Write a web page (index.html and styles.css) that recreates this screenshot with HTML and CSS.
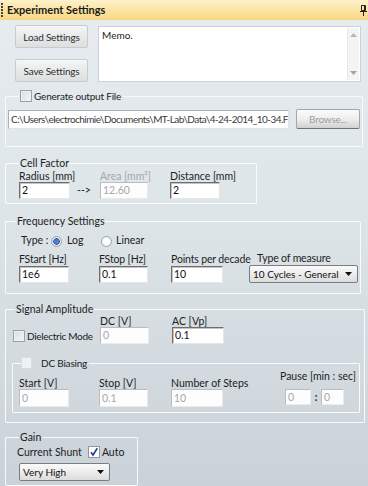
FILE: index.html
```html
<!DOCTYPE html>
<html>
<head>
<meta charset="utf-8">
<link rel="stylesheet" href="styles.css">
</head>
<body>
<div class="titlebar">
  <span class="grip"></span>
  <span class="title">Experiment Settings</span>
  <svg class="pin" width="7" height="11" viewBox="0 0 7 11"><path d="M1.5 0.5h4v5h-4z" fill="none" stroke="#222"/><path d="M0 6.5h7M3.5 6.5v4.5M4.5 1v4" stroke="#222"/></svg>
</div>

<div class="top-row">
  <div class="btn-col">
    <div class="btn">Load Settings</div>
    <div class="btn">Save Settings</div>
  </div>
  <div class="memo">
    <div class="memo-text">Memo.</div>
    <div class="vscroll">
      <svg width="7" height="4" viewBox="0 0 7 4"><path d="M0 4L3.5 0L7 4z" fill="#b4b8bb"/></svg>
      <svg width="7" height="4" viewBox="0 0 7 4"><path d="M0 0L3.5 4L7 0z" fill="#9ea3a6"/></svg>
    </div>
  </div>
</div>

<section class="group g-output">
  <div class="ghead h14"><i class="ln l"></i><span class="legend lg-check"><span class="chk"></span><span>Generate output File</span></span><i class="ln r"></i></div>
  <div class="gbody">
    <div class="path-row">
      <div class="tb path">C:\Users\electrochimie\Documents\MT-Lab\Data\4-24-2014_10-34.F</div>
      <div class="btn browse">Browse...</div>
    </div>
  </div>
</section>

<section class="group g-cell">
  <div class="ghead"><i class="ln l"></i><span class="legend">Cell Factor</span><i class="ln r"></i></div>
  <div class="gbody">
    <div class="row">
      <div class="field w51"><span class="lbl">Radius [mm]</span><div class="tb">2</div></div>
      <span class="arrow">--&gt;</span>
      <div class="field w48 dis"><span class="lbl">Area [mm²]</span><div class="tb">12.60</div></div>
      <div class="field w50 gap22"><span class="lbl">Distance [mm]</span><div class="tb">2</div></div>
    </div>
  </div>
</section>

<section class="group g-freq">
  <div class="ghead"><i class="ln l"></i><span class="legend">Frequency Settings</span><i class="ln r"></i></div>
  <div class="gbody">
    <div class="type-row">
      <span class="type-lbl">Type :</span>
      <span class="radio on"></span><span class="radio-lbl log">Log</span>
      <span class="radio off"></span><span class="radio-lbl">Linear</span>
    </div>
    <div class="row freq-row">
      <div class="field w50"><span class="lbl">FStart [Hz]</span><div class="tb">1e6</div></div>
      <div class="field w49 gap30"><span class="lbl">FStop [Hz]</span><div class="tb">0.1</div></div>
      <div class="field w52 gap24"><span class="lbl">Points per decade</span><div class="tb">10</div></div>
      <div class="field w109 gap26"><span class="lbl lbl-measure">Type of measure</span><div class="combo"><span>10 Cycles - General</span><svg width="7" height="4" viewBox="0 0 7 4"><path d="M0 0h7L3.5 4z" fill="#111"/></svg></div></div>
    </div>
  </div>
</section>

<section class="group g-signal">
  <div class="ghead"><i class="ln l"></i><span class="legend">Signal Amplitude</span><i class="ln r"></i></div>
  <div class="gbody">
    <div class="row">
      <div class="dielectric"><span class="chk"></span><span>Dielectric Mode</span></div>
      <div class="field w49 dis"><span class="lbl dark">DC [V]</span><div class="tb">0</div></div>
      <div class="field w52 gap24"><span class="lbl">AC [Vp]</span><div class="tb">0.1</div></div>
    </div>
    <section class="group g-bias">
      <div class="ghead h14"><i class="ln l"></i><span class="legend lg-check bias"><span class="chk light"></span><span>DC Biasing</span></span><i class="ln r"></i></div>
      <div class="gbody">
        <div class="row">
          <div class="field w50 dis"><span class="lbl dark">Start [V]</span><div class="tb">0</div></div>
          <div class="field w49 gap30 dis"><span class="lbl dark">Stop [V]</span><div class="tb">0.1</div></div>
          <div class="field w52 gap24 dis"><span class="lbl dark">Number of Steps</span><div class="tb">10</div></div>
          <div class="pause dis">
            <span class="lbl dark">Pause [min : sec]</span>
            <div class="pause-row"><div class="tb p1">0</div><span class="colon">:</span><div class="tb p2">0</div></div>
          </div>
        </div>
      </div>
    </section>
  </div>
</section>

<section class="group g-gain">
  <div class="ghead"><i class="ln l"></i><span class="legend">Gain</span><i class="ln r"></i></div>
  <div class="gbody">
    <div class="shunt-row">
      <span>Current Shunt</span>
      <span class="chk checked"><svg width="10" height="10" viewBox="0 0 10 10"><path d="M2 5.2L4 8L8.3 1.2" fill="none" stroke="#2b3d8f" stroke-width="1.6"/></svg></span>
      <span class="auto">Auto</span>
    </div>
    <div class="combo gain-combo"><span>Very High</span><svg width="7" height="4" viewBox="0 0 7 4"><path d="M0 0h7L3.5 4z" fill="#111"/></svg></div>
  </div>
</section>
</body>
</html>
```

FILE: styles.css
```css
* { box-sizing: border-box; }
html, body { margin: 0; padding: 0; }
body {
  width: 368px;
  height: 486px;
  overflow: hidden;
  font-family: Lato, "Liberation Sans", sans-serif;
  font-size: 10.5px;
  line-height: 12px;
  color: #1d1d1d;
  background: linear-gradient(#e6ecef 0%, #dfe6e9 40%, #cad2d9 100%);
}

/* title bar */
.titlebar {
  height: 20px;
  display: flex;
  align-items: center;
  background: linear-gradient(#fdf2cc, #fbe39e 55%, #f8d783);
}
.grip {
  width: 2px;
  height: 15px;
  margin-left: 1px;
  background: repeating-linear-gradient(#444 0 2px, transparent 2px 3px);
}
.title {
  margin-left: 4px;
  font-size: 11px;
  font-weight: bold;
  color: #1a1a1a;
}
.pin { margin-left: auto; margin-right: 1px; }

/* top row */
.top-row {
  display: flex;
  gap: 10px;
  padding: 5px 7px 0 15px;
}
.btn-col {
  display: flex;
  flex-direction: column;
  gap: 11px;
  width: 73px;
}
.btn {
  height: 23px;
  display: flex;
  align-items: center;
  justify-content: center;
  border: 1px solid #c7cbce;
  border-radius: 2px;
  background: linear-gradient(#f6f7f7, #e7e9ea 50%, #dcdfe0);
  color: #303030;
  font-size: 10px;
  letter-spacing: -0.2px;
}
.memo {
  flex: 1;
  height: 56px;
  margin-top: 1px;
  background: #fff;
  border: 1px solid #c9d2d8;
  display: flex;
}
.memo-text {
  flex: 1;
  padding: 2px 0 0 3px;
  font-size: 10px;
}
.vscroll {
  width: 12px;
  margin: 1px 1px 1px 0;
  background: #f3f4f5;
  border-left: 1px solid #e6e8ea;
  display: flex;
  flex-direction: column;
  justify-content: space-between;
  align-items: center;
  padding: 5px 0 5px;
}

/* group boxes: head row draws the top border around the caption */
.group { display: flex; flex-direction: column; }
.ghead {
  display: flex;
  height: 12px;
}
.ghead.h14 { height: 14px; }
.ln {
  align-self: flex-end;
  height: 50%;
  border-top: 1px solid #f8fafb;
}
.ln.l { border-left: 1px solid #f8fafb; border-top-left-radius: 2px; }
.ln.r { flex: 1; border-right: 1px solid #f8fafb; border-top-right-radius: 2px; }
.legend {
  padding: 0 1px;
  white-space: nowrap;
  line-height: 12px;
}
.lg-check {
  display: flex;
  align-items: center;
  gap: 2px;
  font-size: 10px;
  letter-spacing: -0.2px;
}
.gbody {
  border: 1px solid #f8fafb;
  border-top: 0;
  border-radius: 0 0 2px 2px;
}

.g-output { margin: 7px 5px 0 5px; }
.g-output .ln.l { width: 14px; }
.g-output .lg-check { padding: 0 2px 0 1px; }
.g-output > .gbody { padding: 6px 2px 17px 2px; }

.path-row {
  display: flex;
  align-items: center;
  gap: 7px;
}
.tb {
  height: 17px;
  background: #fff;
  border: 1px solid;
  border-color: #6e6e6e #e4e6e7 #e4e6e7 #6e6e6e;
  box-shadow: inset 1px 1px 0 #c4c4c4;
  padding-left: 2px;
  line-height: 15px;
  white-space: nowrap;
  overflow: hidden;
  color: #111;
}
.path {
  width: 282px;
  height: 19px;
  line-height: 17px;
  border-color: #a9b0b4 #e0e4e6 #e0e4e6 #a9b0b4;
  box-shadow: none;
  color: #3a3a3a;
  font-size: 10px;
  letter-spacing: -0.55px;
}
.browse {
  width: 64px;
  height: 20px;
  border: 1px solid #a2a6a8;
  border-bottom-color: #6f7375;
  border-radius: 2px;
  background: linear-gradient(#fbfbfb, #eeeeee 50%, #cfd1d2);
  color: #9c9c9c;
}

.row {
  display: flex;
  align-items: flex-end;
}
.field {
  display: flex;
  flex-direction: column;
}
.lbl { line-height: 12px; white-space: nowrap; }
.w48 { width: 48px; }
.w49 { width: 49px; }
.w50 { width: 50px; }
.w51 { width: 51px; }
.w52 { width: 52px; }
.w109 { width: 109px; }
.gap22 { margin-left: 22px; }
.gap24 { margin-left: 23px; }
.gap26 { margin-left: 26px; }
.gap30 { margin-left: 30px; }

.dis .lbl { color: #a3a7aa; }
.dis .lbl.dark { color: #1d1d1d; }
.dis .tb {
  border-color: #b9bdbf #e8eaeb #e8eaeb #b9bdbf;
  box-shadow: none;
  color: #a8a8a8;
  background: #fdfdfd;
}

/* cell factor */
.g-cell { margin: 10px 0 0 5px; width: 252px; }
.g-cell .ln.l { width: 14px; }
.g-cell > .gbody { padding: 1px 0 4px 13px; }
.arrow {
  width: 30px;
  padding-left: 7px;
  line-height: 15px;
  margin-bottom: 1px;
}

/* frequency */
.g-freq { margin: 11px 7px 0 5px; }
.g-freq .ln.l { width: 11px; }
.g-freq > .gbody { padding: 6px 0 10px 13px; }
.type-row {
  display: flex;
  align-items: center;
  height: 14px;
  padding-left: 2px;
}
.type-lbl { width: 30px; }
.radio {
  width: 11px;
  height: 11px;
  border-radius: 50%;
  border: 1px solid #9aa3a9;
  background: radial-gradient(circle, #fff 0 40%, #e2e6e9 100%);
  margin-top: 2px;
}
.radio.on {
  background: radial-gradient(circle, #4d7fd0 0 2.2px, #2f55a6 2.5px 3px, #e7ebee 3.5px);
}
.radio-lbl { margin-left: 4px; }
.radio-lbl.log { width: 34px; margin-left: 5px; }
.freq-row { margin-top: 5px; }
.freq-row .lbl { line-height: 13px; letter-spacing: -0.15px; }
.lbl-measure { margin-left: 8px; }
.combo {
  height: 18px;
  display: flex;
  align-items: center;
  justify-content: space-between;
  padding: 0 5px 0 3px;
  border: 1px solid #7a7d80;
  border-radius: 2px;
  background: linear-gradient(#fbfbfb, #ececec 50%, #dcdcdc);
  color: #111;
  white-space: nowrap;
  font-size: 10px;
}

/* signal amplitude */
.g-signal { margin: 9px 3px 0 5px; }
.g-signal > .ghead .ln.l { width: 10px; }
.g-signal > .gbody { padding: 0 0 9px 6px; }
.dielectric {
  width: 87px;
  display: flex;
  align-items: center;
  gap: 2px;
  margin-bottom: 2px;
  margin-left: 1px;
  height: 13px;
  white-space: nowrap;
  font-size: 10px;
  letter-spacing: -0.3px;
}
.chk {
  width: 12px;
  height: 12px;
  flex: none;
  border: 1px solid #9aa2a8;
  background: linear-gradient(135deg, #d8dde1, #f6f7f8);
  box-shadow: inset 0 0 0 1px #eef1f3;
  display: inline-flex;
  align-items: center;
  justify-content: center;
}
.chk.light {
  border-color: #d8dde0;
  background: #eef1f2;
  box-shadow: none;
}
.chk.checked {
  background: #fff;
  border-color: #8e979d;
  box-shadow: none;
}

.g-bias { margin: 12px 4px 0 0; }
.g-bias .ln.l { width: 9px; }
.g-bias .lg-check { padding: 0 2px 0 0; gap: 9px; }
.g-bias .lg-check .chk { width: 11px; }
.g-bias > .gbody { padding: 0 0 5px 6px; }
.g-bias .field .tb { height: 18px; line-height: 16px; }
.pause {
  margin-left: 57px;
  display: flex;
  flex-direction: column;
}
.pause .lbl { margin-bottom: 7px; }
.pause-row {
  display: flex;
  align-items: center;
  padding-left: 5px;
  margin-bottom: 2px;
}
.pause-row .tb { height: 16px; line-height: 14px; }
.p1 { width: 26px; }
.p2 { width: 23px; }
.colon { width: 10px; text-align: center; color: #1d1d1d; font-weight: bold; }

/* gain */
.g-gain { margin: 8px 0 0 5px; width: 133px; }
.g-gain .ln.l { width: 14px; }
.g-gain > .gbody { padding: 2px 0 4px 13px; }
.shunt-row {
  display: flex;
  align-items: center;
  height: 14px;
  margin-left: -2px;
  white-space: nowrap;
}
.shunt-row .chk { margin-left: 6px; }
.auto { margin-left: 2px; }
.gain-combo {
  width: 91px;
  height: 18px;
  margin-top: 4px;
}
```
